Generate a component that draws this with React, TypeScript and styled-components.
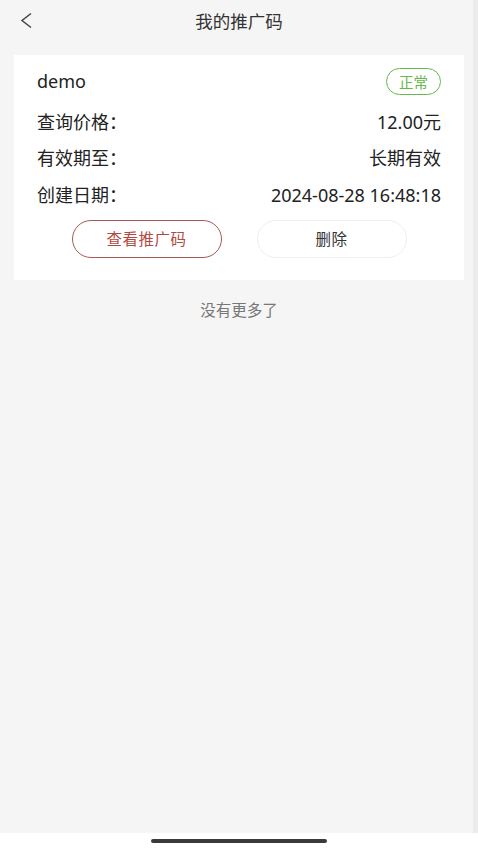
import React from 'react';
import styled, { createGlobalStyle } from 'styled-components';

const GlobalStyle = createGlobalStyle`
  html, body {
    margin: 0;
    padding: 0;
    background: #ffffff;
  }
  body {
    font-family: "Noto Sans", "Noto Sans CJK SC", sans-serif;
    color: #222;
  }
`;

const AppStyles = styled.div`
  width: 478px;
  height: 850px;
  display: flex;
  flex-direction: column;
  overflow: hidden;
`;

const Screen = styled.div`
  flex: 1;
  display: flex;
  flex-direction: column;
  background: linear-gradient(to left, #ebebeb 5px, #f5f5f5 5px);
`;

const Header = styled.div`
  height: 42px;
  display: grid;
  grid-template-columns: 60px 1fr 60px;
  align-items: center;
`;

const BackButton = styled.button`
  border: 0;
  background: none;
  padding: 0 0 0 19px;
  height: 42px;
  display: flex;
  align-items: center;
  cursor: pointer;
`;

const Title = styled.div`
  text-align: center;
  font-size: 17.5px;
  color: #333;
  line-height: 24px;
`;

const Card = styled.div`
  margin: 13px 14px 0;
  padding: 12px 23px 22px;
  background: #fff;
  display: flex;
  flex-direction: column;
  gap: 12.5px;
`;

const Row = styled.div`
  display: flex;
  justify-content: space-between;
  align-items: center;
  font-size: 18px;
  line-height: 24px;
  color: #222;
  min-height: 24px;
`;

const NameRow = styled(Row)`
  height: 29px;
  margin-bottom: 1px;

  & > span:first-child {
    margin-top: -2px;
  }
`;

const Badge = styled.span<{ tone: string }>`
  display: inline-flex;
  align-items: center;
  justify-content: center;
  width: 55px;
  height: 27px;
  box-sizing: border-box;
  border: 1px solid ${props => props.tone};
  border-radius: 14px;
  color: ${props => props.tone};
  font-size: 14.5px;
`;

const Actions = styled.div`
  display: flex;
  justify-content: center;
  gap: 35px;
  margin-top: 0.5px;
`;

const ActionButton = styled.button<{ primary?: boolean }>`
  width: 150px;
  height: 38px;
  box-sizing: border-box;
  border-radius: 19px;
  background: #fff;
  font-family: inherit;
  font-size: 15.5px;
  letter-spacing: 0.5px;
  cursor: pointer;
  border: 1px solid ${props => (props.primary ? '#a65a52' : '#efefef')};
  color: ${props => (props.primary ? '#b24a3f' : '#333')};
`;

const EndNote = styled.div`
  margin-top: 19px;
  text-align: center;
  font-size: 15.5px;
  line-height: 22px;
  color: #777;
`;

const HomeBar = styled.div`
  height: 17px;
  background: #fff;
  display: flex;
  justify-content: center;
  padding-top: 6px;
  box-sizing: border-box;
`;

const HomeIndicator = styled.div`
  width: 176px;
  height: 4px;
  border-radius: 2px;
  background: #3a3a3a;
`;

const rows = [
  { label: '查询价格：', value: '12.00元' },
  { label: '有效期至：', value: '长期有效' },
  { label: '创建日期：', value: '2024-08-28 16:48:18' },
];

export default function App(): JSX.Element {
  return (
    <AppStyles>
      <GlobalStyle />
      <Screen>
        <Header>
          <BackButton aria-label="返回">
            <svg width="14" height="18" viewBox="0 0 14 18">
              <polyline points="12,1.5 3,8.5 12,15.5" fill="none" stroke="#444" strokeWidth="1.5" />
            </svg>
          </BackButton>
          <Title>我的推广码</Title>
          <span />
        </Header>

        <Card>
          <NameRow>
            <span>demo</span>
            <Badge tone="#66b84a">正常</Badge>
          </NameRow>
          {rows.map(row => (
            <Row key={row.label}>
              <span>{row.label}</span>
              <span>{row.value}</span>
            </Row>
          ))}
          <Actions>
            <ActionButton primary>查看推广码</ActionButton>
            <ActionButton>删除</ActionButton>
          </Actions>
        </Card>

        <EndNote>没有更多了</EndNote>
      </Screen>
      <HomeBar>
        <HomeIndicator />
      </HomeBar>
    </AppStyles>
  );
}
